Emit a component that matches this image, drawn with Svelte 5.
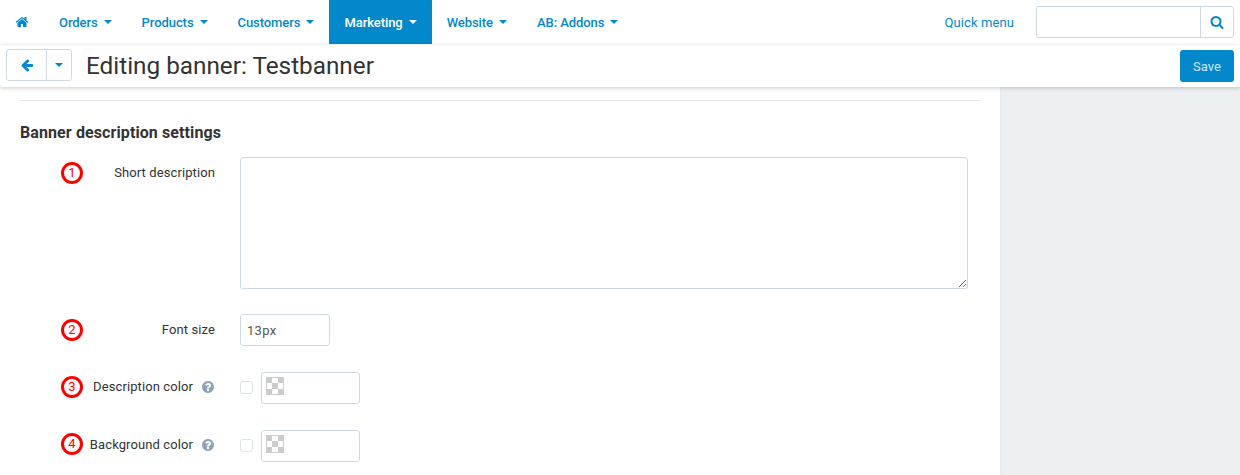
<script>
  const HOME = "M1472 992v480q0 26-19 45t-45 19h-384v-384h-256v384h-384q-26 0-45-19t-19-45v-480q0-1 .5-3t.5-3l575-474 575 474q1 2 1 6zm223-69l-62 74q-8 9-21 11h-3q-13 0-21-7l-692-577-692 577q-12 8-24 7-13-2-21-11l-62-74q-8-10-7-23.500t11-21.500l719-599q32-26 76-26t76 26l244 204v-195q0-14 9-23t23-9h192q14 0 23 9t9 23v408l219 182q10 8 11 21.500t-7 23.500z";
  const BACK = "M1664 896v128q0 53-32.500 90.500t-84.500 37.500h-704l293 294q38 36 38 90t-38 90l-75 76q-37 37-90 37-52 0-91-37l-651-652q-37-37-37-90 0-52 37-91l651-650q38-38 91-38 52 0 90 38l75 74q38 38 38 91t-38 91l-293 293h704q52 0 84.500 37.500t32.500 90.500z";
  const SEARCH = "M1216 832q0-185-131.500-316.500t-316.500-131.500-316.500 131.500-131.500 316.500 131.500 316.500 316.500 131.500 316.500-131.500 131.500-316.500zm512 832q0 52-38 90t-90 38q-54 0-90-38l-343-342q-179 124-399 124-143 0-273.500-55.500t-225-150-150-225-55.500-273.500 55.500-273.500 150-225 225-150 273.500-55.500 273.500 55.500 225 150 150 225 55.500 273.500q0 220-124 399l343 343q37 37 37 90z";
  const HELP = "M1024 1376v-192q0-14-9-23t-23-9h-192q-14 0-23 9t-9 23v192q0 14 9 23t23 9h192q14 0 23-9t9-23zm256-672q0-88-55.500-163t-138.500-116-170-41q-243 0-371 213-15 24 8 42l132 100q7 6 19 6 16 0 25-12 53-68 86-92 34-24 86-24 48 0 85.500 26t37.500 59q0 38-20 61t-68 45q-63 28-115.500 86.500t-52.500 125.500v36q0 14 9 23t23 9h192q14 0 23-9t9-23q0-19 21.500-49.500t54.500-49.500q32-18 49-28.500t46-35 44.500-48 28-60.500 12.500-81zm384 192q0 209-103 385.500t-279.500 279.500-385.500 103-385.500-103-279.500-279.500-103-385.500 103-385.500 279.500-279.500 385.500-103 385.500 103 279.500 279.500 103 385.500z";

  const menus = ["Orders", "Products", "Customers", "Marketing", "Website", "AB: Addons"];
  const colors = [
    { n: 3, label: "Description color" },
    { n: 4, label: "Background color" },
  ];
</script>

<header class="topbar">
  <nav class="nav">
    <a class="nav-item home" href="#home" aria-label="Home">
      <svg viewBox="0 0 1792 1792" width="14" height="14"><path d={HOME} /></svg>
    </a>
    {#each menus as m}
      <a class="nav-item" class:active={m === "Marketing"} href="#menu">
        {m}<span class="caret"></span>
      </a>
    {/each}
  </nav>
  <a class="quick" href="#quick">Quick menu</a>
  <div class="search">
    <input type="text" />
    <button type="button" aria-label="Search">
      <svg viewBox="0 0 1792 1792" width="14" height="14"><path d={SEARCH} /></svg>
    </button>
  </div>
</header>

<div class="subbar">
  <div class="back-group">
    <button type="button" class="back" aria-label="Back">
      <svg viewBox="0 0 1792 1792" width="14" height="14"><path d={BACK} /></svg>
    </button>
    <button type="button" class="back-more" aria-label="More"><span class="caret"></span></button>
  </div>
  <h1>Editing banner: Testbanner</h1>
  <button type="button" class="save">Save</button>
</div>

<div class="page">
  <main class="content">
    <hr />
    <h2>Banner description settings</h2>

    <div class="row first">
      <span class="marker">1</span>
      <label for="desc">Short description</label>
      <textarea id="desc"></textarea>
    </div>

    <div class="row second">
      <span class="marker">2</span>
      <label for="size">Font size</label>
      <input id="size" class="size" type="text" value="13px" />
    </div>

    {#each colors as c}
      <div class="row color">
        <span class="marker">{c.n}</span>
        <span class="label">
          {c.label}
          <svg class="help" viewBox="0 0 1792 1792" width="14" height="14"><path d={HELP} /></svg>
        </span>
        <div class="picker">
          <input type="checkbox" />
          <div class="swatch-box"><span class="swatch"></span></div>
        </div>
      </div>
    {/each}
  </main>
  <aside class="side"></aside>
</div>

<style>
  :global(html),
  :global(body) {
    height: 475px;
    overflow: hidden;
  }
  :global(body) {
    background: #fff;
    color: #333;
    font-family: Roboto, "Liberation Sans", sans-serif;
    font-size: 13px;
  }
  .topbar {
    display: flex;
    align-items: center;
    height: 44px;
    padding-right: 6px;
    background: #fff;
  }
  .nav {
    display: flex;
    flex: 1;
    height: 100%;
  }
  .nav-item {
    display: flex;
    align-items: center;
    padding: 0 15px;
    color: #0388cc;
    font-weight: 500;
    letter-spacing: -0.07px;
    text-decoration: none;
  }
  .nav-item svg {
    fill: #0388cc;
  }
  .nav-item.active {
    background: #0388cc;
    color: #fff;
  }
  .caret {
    display: inline-block;
    width: 0;
    height: 0;
    margin-left: 6px;
    border-top: 4px solid currentColor;
    border-left: 4px solid transparent;
    border-right: 4px solid transparent;
  }
  .quick {
    margin-right: 22px;
    color: #0388cc;
    letter-spacing: 0.1px;
    text-decoration: none;
  }
  .search {
    display: flex;
    width: 198px;
    height: 32px;
    box-sizing: border-box;
    border: 1px solid #ced9e3;
    border-radius: 3px;
  }
  .search input {
    flex: 1;
    min-width: 0;
    border: none;
    outline: none;
    background: transparent;
  }
  .search button {
    display: flex;
    align-items: center;
    justify-content: center;
    width: 33px;
    padding: 0;
    border: none;
    border-left: 1px solid #ced9e3;
    background: transparent;
  }
  .search svg {
    fill: #0388cc;
  }
  .subbar {
    position: relative;
    z-index: 1;
    display: flex;
    align-items: center;
    height: 42px;
    margin-top: 1px;
    padding: 0 6px;
    background: #fff;
    box-shadow: 0 -1px 1px rgba(0, 0, 0, 0.015), 0 1px 4px rgba(0, 0, 0, 0.2);
    border-radius: 0 0 3px 3px;
  }
  .back-group {
    display: flex;
    width: 66px;
    height: 32px;
    margin-bottom: 2px;
    box-sizing: border-box;
    border: 1px solid #ced9e3;
    border-radius: 3px;
  }
  .back-group button {
    display: flex;
    align-items: center;
    justify-content: center;
    padding: 0;
    border: none;
    background: transparent;
    color: #0388cc;
  }
  .back {
    width: 39px;
  }
  .back svg {
    fill: #0388cc;
  }
  .back-group .back-more {
    flex: 1;
    border-left: 1px solid #ced9e3;
  }
  .back-more .caret {
    margin: 0;
  }
  h1 {
    flex: 1;
    margin: 0 0 2px 14px;
    color: #333;
    font-size: 24.3px;
    font-weight: 400;
  }
  .save {
    width: 54px;
    height: 32px;
    padding: 0;
    border: none;
    border-radius: 3px;
    background: #0388cc;
    color: #cfe7f5;
    font: inherit;
  }
  .page {
    display: flex;
    height: 388px;
  }
  .content {
    width: 960px;
    padding: 13px 20px 0;
    background: #fff;
  }
  .side {
    flex: 1;
    background: #ecf0f3;
    box-shadow: inset 2px 0 2px -1px rgba(0, 0, 0, 0.03);
  }
  hr {
    height: 1px;
    margin: 0;
    border: none;
    background: #e6e9ec;
  }
  h2 {
    margin: 22px 0 15px;
    color: #333;
    font-size: 16px;
    line-height: 19px;
    font-weight: 700;
    letter-spacing: 0.1px;
  }
  .row {
    position: relative;
    display: flex;
    align-items: flex-start;
    gap: 25px;
    margin-bottom: 26px;
  }
  .row.first {
    margin-bottom: 25px;
  }
  .row label,
  .label {
    display: flex;
    align-items: center;
    justify-content: flex-end;
    flex: 0 0 195px;
    height: 32px;
    padding-bottom: 1px;
    box-sizing: border-box;
    color: #333;
    letter-spacing: 0.1px;
  }
  .row.color .label {
    padding-bottom: 3px;
  }
  .help {
    margin-left: 8px;
    fill: #8fa3b8;
  }
  .marker {
    position: absolute;
    left: 41px;
    top: 5px;
    width: 22px;
    height: 22px;
    box-sizing: border-box;
    border: 3px solid #f00;
    border-radius: 50%;
    background: #fff;
    box-shadow: 0 0 2px rgba(255, 255, 255, 0.9);
    color: #f00;
    font-size: 13px;
    line-height: 16px;
    text-align: center;
  }
  .row.color .marker {
    top: 4px;
  }
  .row.color:last-child .marker {
    top: 3px;
  }
  textarea,
  input[type="text"].size,
  .swatch-box {
    box-sizing: border-box;
    border: 1px solid #ced9e3;
    border-radius: 3px;
    background: #fff;
  }
  textarea {
    display: block;
    width: 728px;
    height: 132px;
    margin: 0;
    outline: none;
  }
  input[type="text"].size {
    width: 90px;
    height: 32px;
    padding: 0 6px;
    outline: none;
    color: #555;
    font: inherit;
    letter-spacing: 0.3px;
  }
  .picker {
    display: flex;
    align-items: center;
    height: 32px;
  }
  .picker input {
    appearance: none;
    width: 13px;
    height: 13px;
    margin: -2px 8px 0 0;
    box-sizing: border-box;
    border: 1px solid #dbe2e9;
    border-radius: 3px;
    background: #fff;
  }
  .swatch-box {
    width: 99px;
    height: 32px;
    padding: 4px;
  }
  .swatch {
    display: block;
    width: 18px;
    height: 18px;
    background-image: conic-gradient(#fff 25%, #ccc 0 50%, #fff 0 75%, #ccc 0);
    background-size: 12px 12px;
    box-shadow: inset 0 0 0 1px #ccc;
  }
</style>
